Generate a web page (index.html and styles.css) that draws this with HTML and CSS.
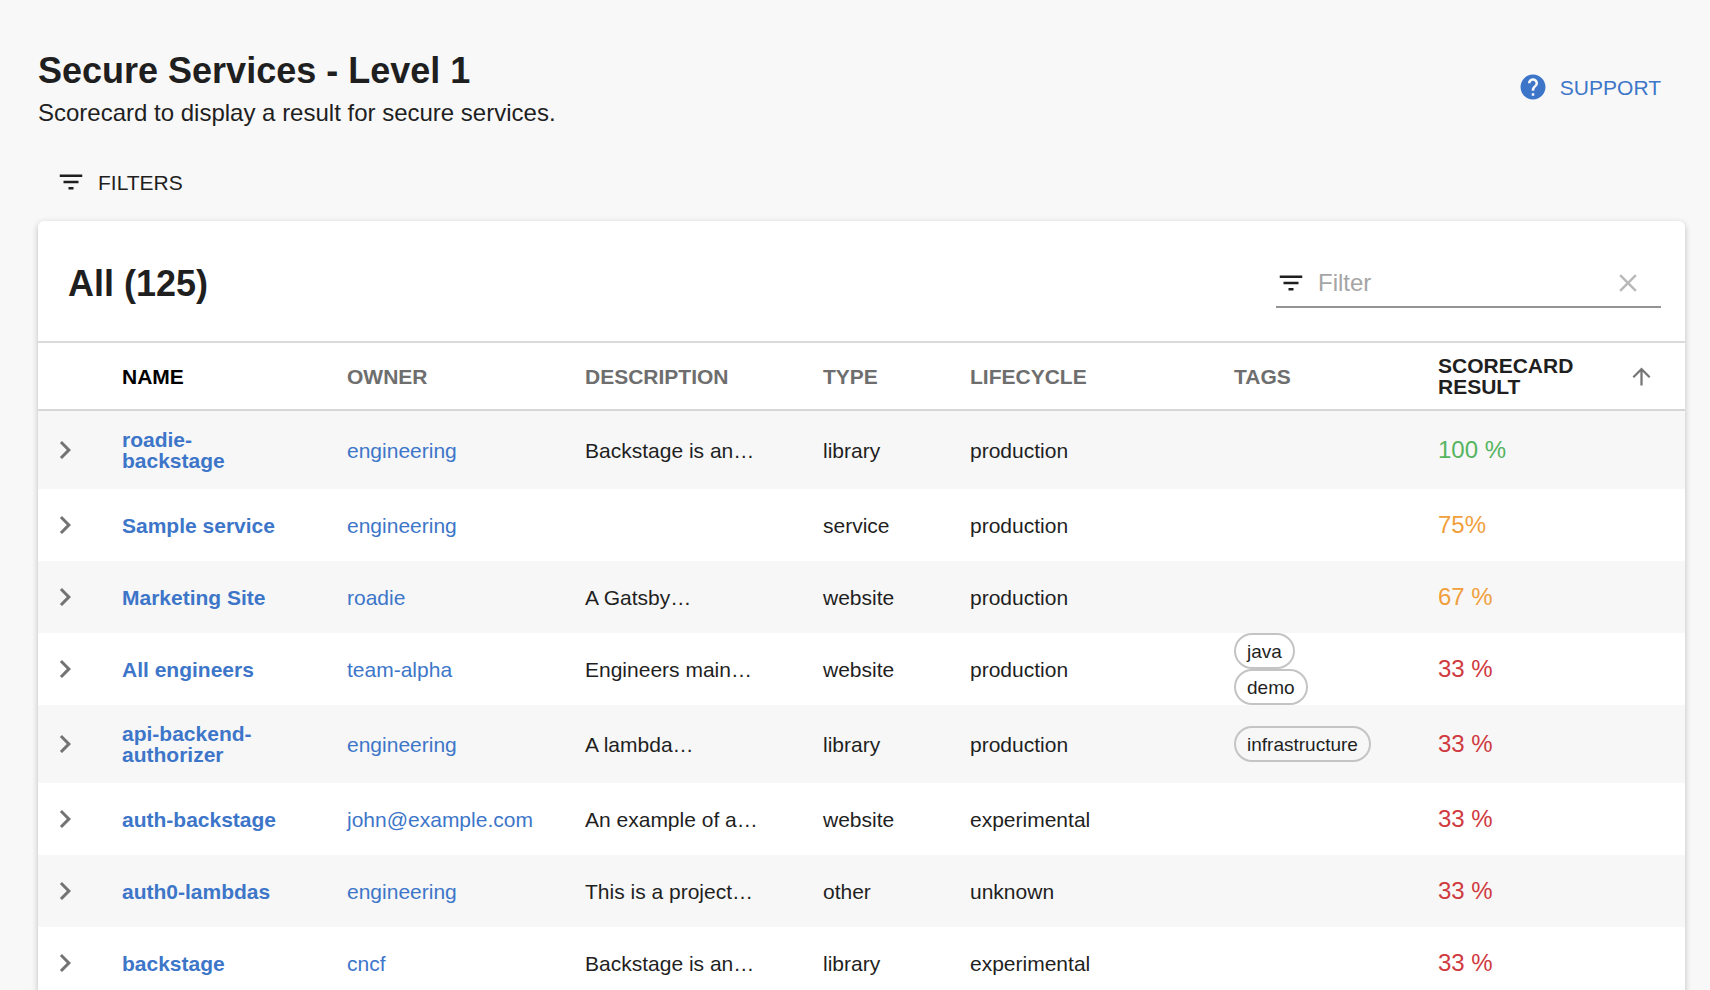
FILE: index.html
```html
<!DOCTYPE html>
<html lang="en">
<head>
    <meta charset="UTF-8">
    <meta name="viewport" content="width=device-width, initial-scale=1.0">
    <title>Secure Services - Level 1</title>
    <link rel="stylesheet" href="styles.css">
</head>
<body>
    <!-- Shared icons -->
    <svg class="icon-defs" aria-hidden="true">
        <symbol id="icon-filter" viewBox="0 0 24 24"><path d="M10 18h4v-2h-4v2zM3 6v2h18V6H3zm3 7h12v-2H6v2z"/></symbol>
        <symbol id="icon-chevron" viewBox="0 0 24 24"><path d="M10 6L8.59 7.41 13.17 12l-4.58 4.59L10 18l6-6z"/></symbol>
        <symbol id="icon-arrow-up" viewBox="0 0 24 24"><path d="M4 12l1.41 1.41L11 7.83V20h2V7.83l5.58 5.59L20 12l-8-8-8 8z"/></symbol>
        <symbol id="icon-clear" viewBox="0 0 24 24"><path d="M19 6.41L17.59 5 12 10.59 6.41 5 5 6.41 10.59 12 5 17.59 6.41 19 12 13.41 17.59 19 19 17.59 13.41 12z"/></symbol>
        <symbol id="icon-help" viewBox="0 0 24 24"><path d="M12 2C6.48 2 2 6.48 2 12s4.48 10 10 10 10-4.48 10-10S17.52 2 12 2zm1 17h-2v-2h2v2zm2.07-7.75l-.9.92C13.45 12.9 13 13.5 13 15h-2v-.5c0-1.1.45-2.1 1.17-2.83l1.24-1.26c.37-.36.59-.86.59-1.41 0-1.1-.9-2-2-2s-2 .9-2 2H8c0-2.21 1.79-4 4-4s4 1.79 4 4c0 .88-.36 1.68-.93 2.25z"/></symbol>
    </svg>

    <main class="page">
        <header class="page-header">
            <div>
                <h1>Secure Services - Level 1</h1>
                <p class="subtitle">Scorecard to display a result for secure services.</p>
            </div>
            <button type="button" class="text-button support-button">
                <svg class="icon"><use href="#icon-help"/></svg>
                SUPPORT
            </button>
        </header>

        <button type="button" class="text-button filters-button">
            <svg class="icon"><use href="#icon-filter"/></svg>
            FILTERS
        </button>

        <section class="card">
            <div class="toolbar">
                <h2>All (125)</h2>
                <div class="search">
                    <svg class="icon"><use href="#icon-filter"/></svg>
                    <input type="text" placeholder="Filter" aria-label="Filter">
                    <button type="button" class="clear-button" aria-label="Clear filter">
                        <svg class="icon"><use href="#icon-clear"/></svg>
                    </button>
                </div>
            </div>

            <table>
                <colgroup>
                    <col class="col-expand">
                    <col class="col-name">
                    <col class="col-owner">
                    <col class="col-description">
                    <col class="col-type">
                    <col class="col-lifecycle">
                    <col class="col-tags">
                    <col class="col-result">
                </colgroup>
                <thead>
                    <tr>
                        <td></td>
                        <th class="active">NAME</th>
                        <th>OWNER</th>
                        <th>DESCRIPTION</th>
                        <th>TYPE</th>
                        <th>LIFECYCLE</th>
                        <th>TAGS</th>
                        <th class="sorted" aria-sort="ascending">
                            <button type="button" class="sort-button">
                                <span>SCORECARD<br>RESULT</span>
                                <svg class="icon-sort"><use href="#icon-arrow-up"/></svg>
                            </button>
                        </th>
                    </tr>
                </thead>
                <tbody>
                    <tr>
                        <td class="expand"><button type="button" aria-label="Expand row"><svg><use href="#icon-chevron"/></svg></button></td>
                        <td class="name"><a href="#">roadie-backstage</a></td>
                        <td><a href="#">engineering</a></td>
                        <td>Backstage is an…</td>
                        <td>library</td>
                        <td>production</td>
                        <td class="tags"></td>
                        <td class="result good">100 %</td>
                    </tr>
                    <tr>
                        <td class="expand"><button type="button" aria-label="Expand row"><svg><use href="#icon-chevron"/></svg></button></td>
                        <td class="name"><a href="#">Sample service</a></td>
                        <td><a href="#">engineering</a></td>
                        <td></td>
                        <td>service</td>
                        <td>production</td>
                        <td class="tags"></td>
                        <td class="result fair">75%</td>
                    </tr>
                    <tr>
                        <td class="expand"><button type="button" aria-label="Expand row"><svg><use href="#icon-chevron"/></svg></button></td>
                        <td class="name"><a href="#">Marketing Site</a></td>
                        <td><a href="#">roadie</a></td>
                        <td>A Gatsby…</td>
                        <td>website</td>
                        <td>production</td>
                        <td class="tags"></td>
                        <td class="result fair">67 %</td>
                    </tr>
                    <tr>
                        <td class="expand"><button type="button" aria-label="Expand row"><svg><use href="#icon-chevron"/></svg></button></td>
                        <td class="name"><a href="#">All engineers</a></td>
                        <td><a href="#">team-alpha</a></td>
                        <td>Engineers main…</td>
                        <td>website</td>
                        <td>production</td>
                        <td class="tags">
                            <div class="tag-list">
                                <span class="chip">java</span>
                                <span class="chip">demo</span>
                            </div>
                        </td>
                        <td class="result poor">33 %</td>
                    </tr>
                    <tr>
                        <td class="expand"><button type="button" aria-label="Expand row"><svg><use href="#icon-chevron"/></svg></button></td>
                        <td class="name"><a href="#">api-backend-authorizer</a></td>
                        <td><a href="#">engineering</a></td>
                        <td>A lambda…</td>
                        <td>library</td>
                        <td>production</td>
                        <td class="tags">
                            <div class="tag-list">
                                <span class="chip">infrastructure</span>
                            </div>
                        </td>
                        <td class="result poor">33 %</td>
                    </tr>
                    <tr>
                        <td class="expand"><button type="button" aria-label="Expand row"><svg><use href="#icon-chevron"/></svg></button></td>
                        <td class="name"><a href="#">auth-backstage</a></td>
                        <td><a href="#">john@example.com</a></td>
                        <td>An example of a…</td>
                        <td>website</td>
                        <td>experimental</td>
                        <td class="tags"></td>
                        <td class="result poor">33 %</td>
                    </tr>
                    <tr>
                        <td class="expand"><button type="button" aria-label="Expand row"><svg><use href="#icon-chevron"/></svg></button></td>
                        <td class="name"><a href="#">auth0-lambdas</a></td>
                        <td><a href="#">engineering</a></td>
                        <td>This is a project…</td>
                        <td>other</td>
                        <td>unknown</td>
                        <td class="tags"></td>
                        <td class="result poor">33 %</td>
                    </tr>
                    <tr>
                        <td class="expand"><button type="button" aria-label="Expand row"><svg><use href="#icon-chevron"/></svg></button></td>
                        <td class="name"><a href="#">backstage</a></td>
                        <td><a href="#">cncf</a></td>
                        <td>Backstage is an…</td>
                        <td>library</td>
                        <td>experimental</td>
                        <td class="tags"></td>
                        <td class="result poor">33 %</td>
                    </tr>
                </tbody>
            </table>
        </section>
    </main>
</body>
</html>
```

FILE: styles.css
```css
* {
    box-sizing: border-box;
}
body {
    margin: 0;
    font-family: "Helvetica Neue", "Liberation Sans", Arial, sans-serif;
    font-size: 21px;
    line-height: 21px;
    color: #1f1f1f;
    background-color: #f8f8f8;
}
h1, h2, p {
    margin: 0;
}
a {
    color: #3d76c9;
    text-decoration: none;
}
a:hover {
    text-decoration: underline;
}
button {
    padding: 0;
    border: none;
    background: none;
    color: inherit;
    font: inherit;
    cursor: pointer;
}
svg {
    display: block;
    flex-shrink: 0;
    fill: currentColor;
}
.icon-defs {
    display: none;
}
.icon {
    width: 30px;
    height: 30px;
}
.page {
    height: 100vh;
    padding: 47px 25px 0 38px;
    overflow: hidden;
}

/* Header */
.page-header {
    display: flex;
    justify-content: space-between;
    align-items: flex-start;
    padding-right: 24px;
    margin-bottom: 24px;
}
h1, h2 {
    font-size: 36px;
    line-height: 48px;
    font-weight: bold;
}
.subtitle {
    font-size: 24px;
    line-height: 36px;
}
.text-button {
    display: flex;
    align-items: center;
    gap: 12px;
    height: 54px;
}
.support-button {
    height: 80px;
    color: #3d76c9;
}
.filters-button {
    padding: 0 18px;
    margin-bottom: 12px;
}

/* Table card */
.card {
    background-color: #fff;
    border-radius: 6px;
    box-shadow: 0 2px 6px rgba(0, 0, 0, 0.24);
}
.toolbar {
    display: flex;
    justify-content: space-between;
    align-items: center;
    height: 120px;
    padding: 6px 24px 0 30px;
}
.search {
    display: flex;
    align-items: center;
    gap: 12px;
    width: 385px;
    height: 48px;
    padding-right: 18px;
    border-bottom: 2px solid #949494;
}
.search input {
    flex: 1;
    min-width: 0;
    padding: 0;
    border: none;
    outline: none;
    background: none;
    color: inherit;
    font-family: inherit;
    font-size: 24px;
}
.search input::placeholder {
    color: #a5a5a5;
    opacity: 1;
}
.clear-button {
    color: #b9b9b9;
}
table {
    width: 100%;
    table-layout: fixed;
    border-collapse: separate;
    border-spacing: 0;
}
.col-expand { width: 54px; }
.col-name { width: 225px; }
.col-owner { width: 238px; }
.col-description { width: 238px; }
.col-type { width: 147px; }
.col-lifecycle { width: 264px; }
.col-tags { width: 204px; }
.col-result { width: 277px; }

th, td {
    padding: 18px 30px;
    text-align: left;
    vertical-align: middle;
}
thead th, thead td {
    height: 70px;
    padding-top: 0;
    padding-bottom: 0;
    border-top: 2px solid #dadada;
    border-bottom: 2px solid #d6d6d6;
    color: #6e6e6e;
}
thead .active {
    color: #000;
}
.sort-button {
    display: flex;
    justify-content: space-between;
    align-items: center;
    width: 100%;
    color: #1f1f1f;
    text-align: left;
}
.icon-sort {
    width: 27px;
    height: 27px;
    color: #757575;
}
tbody tr:nth-child(odd) {
    background-color: #f7f7f7;
}
tbody td {
    white-space: nowrap;
}
tbody .name {
    font-weight: bold;
    white-space: normal;
}
tbody .expand {
    padding: 0 9px;
}
.expand button {
    display: block;
    color: #737373;
}
.expand svg {
    width: 36px;
    height: 36px;
}
tbody .tags {
    padding-top: 0;
    padding-bottom: 0;
}
.tag-list {
    display: flex;
    flex-direction: column;
    align-items: flex-start;
}
.chip {
    display: flex;
    align-items: center;
    height: 36px;
    padding: 0 11px;
    border: 2px solid #c4c4c4;
    border-radius: 18px;
    font-size: 19px;
}
.result {
    font-size: 24px;
    line-height: 36px;
}
.good {
    color: #55b460;
}
.fair {
    color: #f19f3d;
}
.poor {
    color: #cf3a3f;
}
```
